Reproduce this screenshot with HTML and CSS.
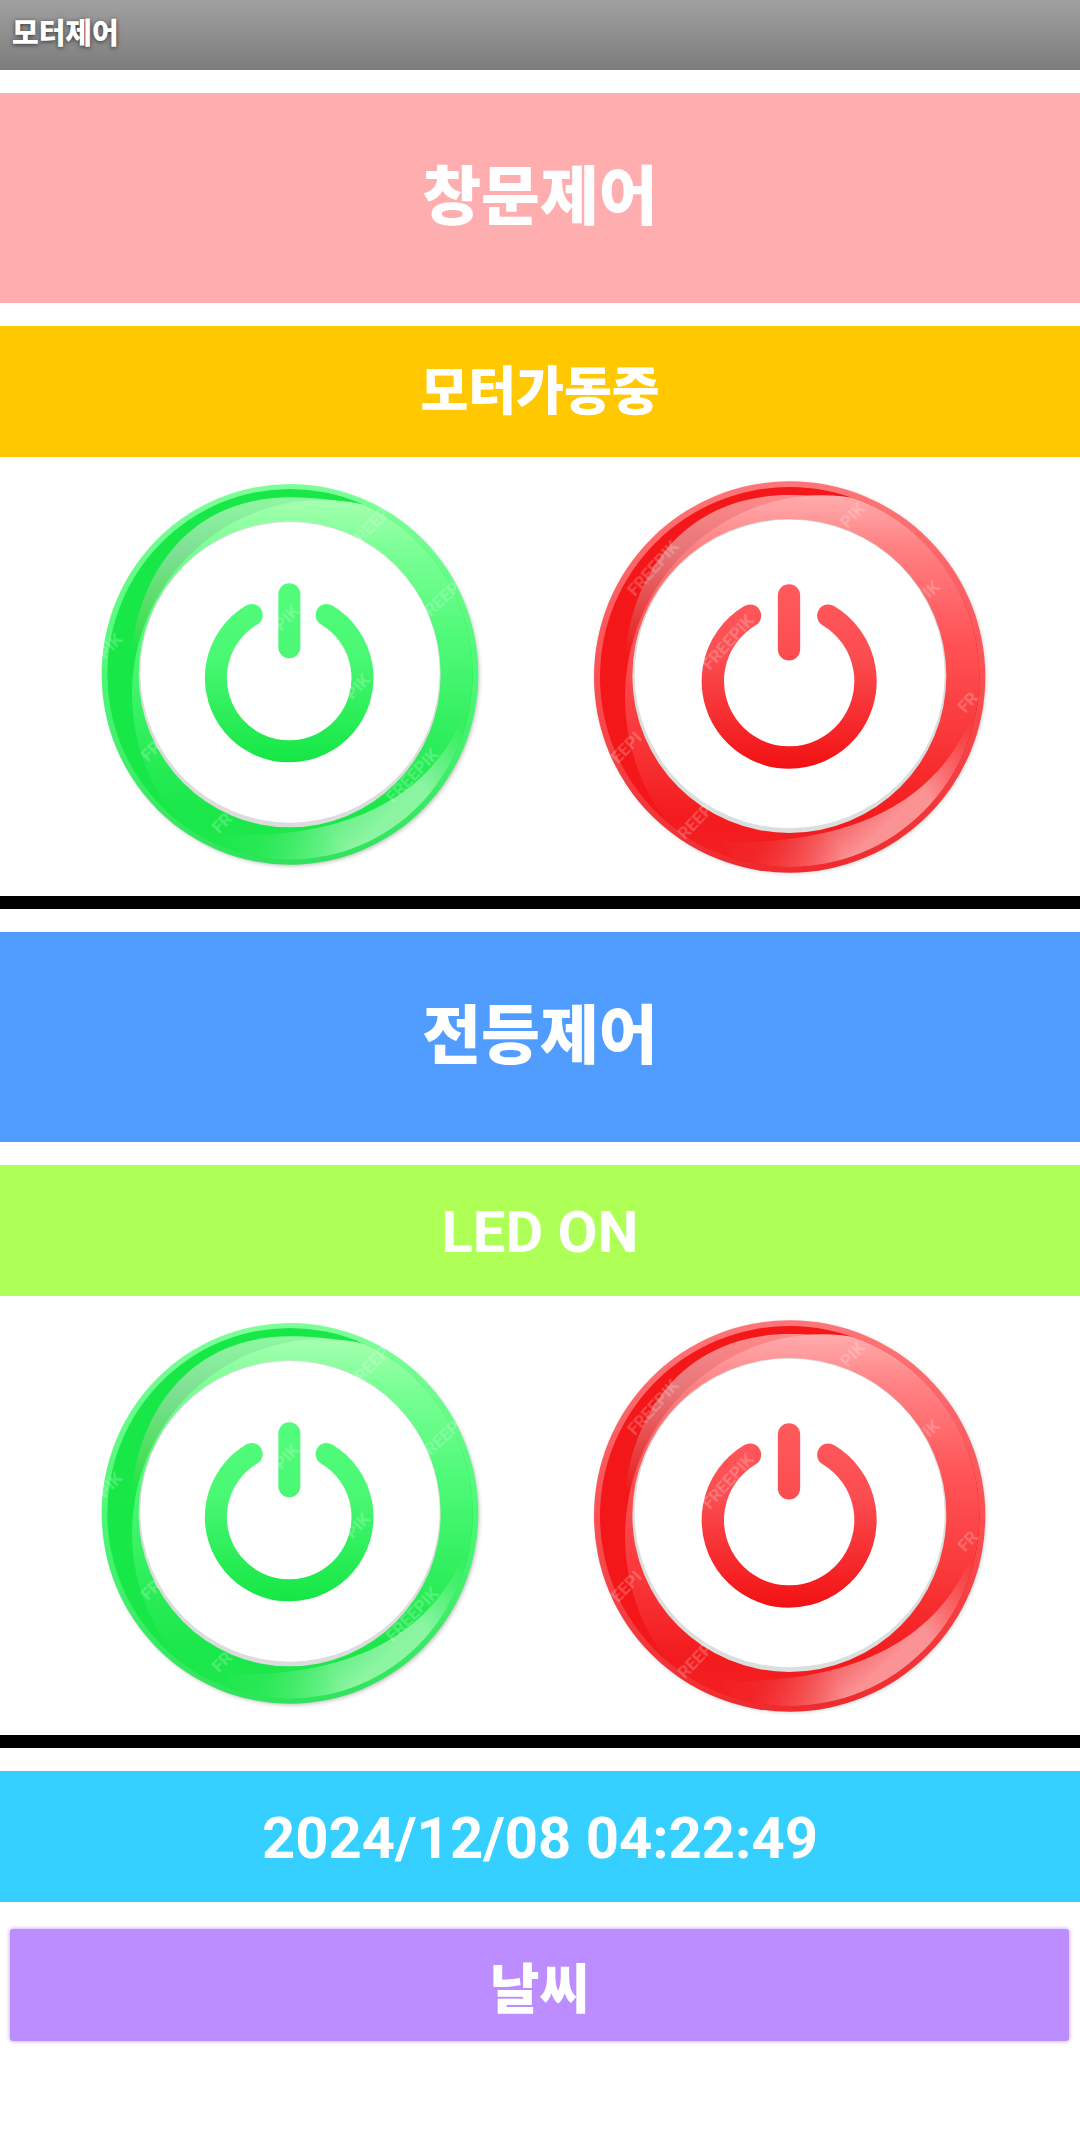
FILE: index.html
```html
<!DOCTYPE html>
<html lang="ko">
<head>
<meta charset="utf-8">
<meta name="viewport" content="width=device-width, initial-scale=1">
<title>모터제어</title>
<link rel="stylesheet" href="styles.css">
</head>
<body>
<header class="titlebar"><h1 class="titlebar-text">모터제어</h1></header>
<main class="screen">
  <section class="panel">
    <h2 class="heading heading-window">창문제어</h2>
    <p class="status status-motor">모터가동중</p>
    <div class="controls">
      <button class="power" type="button" aria-label="모터 켜기">
        <svg class="power-icon" viewBox="0 0 540 439" aria-hidden="true">
          <defs>
            <linearGradient id="g-rim" x1="0" y1="0" x2="0" y2="1"><stop offset="0" stop-color="#7dff98"/><stop offset=".5" stop-color="#4df876"/><stop offset="1" stop-color="#30e35c"/></linearGradient>
            <linearGradient id="g-gloss" gradientUnits="userSpaceOnUse" x1="0" y1="112" x2="0" y2="1216"><stop offset="0" stop-color="#8ff8a2"/><stop offset=".15" stop-color="#7fdf94"/><stop offset=".34" stop-color="#47df55"/><stop offset=".42" stop-color="#17e847"/><stop offset="1" stop-color="#17e847"/></linearGradient>
            <linearGradient id="g-face" x1="0" y1="0" x2="0" y2="1"><stop offset="0" stop-color="#a6ffb0"/><stop offset=".12" stop-color="#7cff96"/><stop offset=".35" stop-color="#50fa79"/><stop offset=".6" stop-color="#30ef5d"/><stop offset=".8" stop-color="#1ae749"/><stop offset="1" stop-color="#20ea4f"/></linearGradient>
            <linearGradient id="g-shine" gradientUnits="userSpaceOnUse" x1="740" y1="960" x2="880" y2="1110"><stop offset="0" stop-color="#40e968"/><stop offset="1" stop-color="#8cf5a2"/></linearGradient>
            <linearGradient id="g-fade" gradientUnits="userSpaceOnUse" x1="420" y1="1180" x2="1160" y2="780"><stop offset="0" stop-color="#fff" stop-opacity="0"/><stop offset=".4" stop-color="#fff"/><stop offset=".75" stop-color="#fff"/><stop offset="1" stop-color="#fff" stop-opacity="0"/></linearGradient>
            <linearGradient id="g-mark" gradientUnits="userSpaceOnUse" x1="0" y1="370" x2="0" y2="910"><stop offset="0" stop-color="#52fd7c"/><stop offset=".4" stop-color="#4af874"/><stop offset="1" stop-color="#14e644"/></linearGradient>
            <clipPath id="g-clip"><ellipse cx="630" cy="643" rx="548" ry="556"/></clipPath>
            <mask id="g-mask" maskUnits="userSpaceOnUse" x="0" y="0" width="1300" height="1300"><rect width="1300" height="1300" fill="url(#g-fade)"/></mask>
            <filter id="soft" x="-10%" y="-10%" width="120%" height="120%"><feGaussianBlur stdDeviation="7"/></filter>
            <g id="green-power" transform="translate(80 3) scale(.33333)">
              <ellipse cx="635" cy="649" rx="562" ry="568" fill="#777" opacity=".5" filter="url(#soft)"/>
              <ellipse cx="630" cy="643" rx="565" ry="571" fill="url(#g-rim)"/>
              <g clip-path="url(#g-clip)">
                <rect width="1300" height="1300" fill="#17e847"/>
                <path d="M152 643C152 370 310 112 630 112C740 112 830 130 900 155L1200 300V1250H400C240 1100 152 880 152 643Z" fill="url(#g-gloss)"/>
                <ellipse cx="728" cy="702" rx="572" ry="582" fill="url(#g-face)"/>
                <path d="M900 155C1080 240 1178 430 1178 643V300L1000 120Z" fill="#50fa79"/>
                <path mask="url(#g-mask)" d="M1178 690C1100 970 860 1140 430 1125L500 1200H800L1178 950Z" fill="url(#g-shine)"/>
              </g>
              <ellipse cx="629" cy="643" rx="453" ry="459" fill="#dcdcdc"/>
              <ellipse cx="630" cy="637" rx="449" ry="451" fill="#fff"/>
              <path d="M515 465A220 220 0 1 0 740 465M628 403V562" fill="none" stroke="url(#g-mark)" stroke-width="66" stroke-linecap="round"/>
              <g class="watermark">
                <text transform="translate(846 252) rotate(-46)">REEPIK</text><text transform="translate(1052 472) rotate(-42)">REEPIK</text>
                <text transform="translate(940 1032) rotate(-46)">FREEPIK</text><text transform="translate(75 600) rotate(-46)">PIK</text>
                <text transform="translate(205 908) rotate(-46)">FR</text><text transform="translate(418 1124) rotate(-46)">FR</text>
                <text transform="translate(605 515) rotate(-46)">PIK</text><text transform="translate(818 722) rotate(-46)">PIK</text>
              </g>
            </g>
          </defs>
          <use href="#green-power"/>
        </svg>
      </button>
      <button class="power" type="button" aria-label="모터 끄기">
        <svg class="power-icon" viewBox="0 0 540 439" aria-hidden="true">
          <defs>
            <linearGradient id="r-rim" x1="0" y1="0" x2="0" y2="1"><stop offset="0" stop-color="#ff7577"/><stop offset=".5" stop-color="#fa5053"/><stop offset="1" stop-color="#ee2b2e"/></linearGradient>
            <linearGradient id="r-gloss" gradientUnits="userSpaceOnUse" x1="0" y1="105" x2="0" y2="1240"><stop offset="0" stop-color="#ff8a8b"/><stop offset=".15" stop-color="#e67577"/><stop offset=".34" stop-color="#e63638"/><stop offset=".42" stop-color="#f31719"/><stop offset="1" stop-color="#f31719"/></linearGradient>
            <linearGradient id="r-face" x1="0" y1="0" x2="0" y2="1"><stop offset="0" stop-color="#ffacad"/><stop offset=".12" stop-color="#ff8385"/><stop offset=".35" stop-color="#ff5457"/><stop offset=".6" stop-color="#f93739"/><stop offset=".8" stop-color="#f31b1d"/><stop offset="1" stop-color="#f52123"/></linearGradient>
            <linearGradient id="r-shine" gradientUnits="userSpaceOnUse" x1="770" y1="980" x2="910" y2="1130"><stop offset="0" stop-color="#ef3739"/><stop offset="1" stop-color="#fb9294"/></linearGradient>
            <linearGradient id="r-fade" gradientUnits="userSpaceOnUse" x1="430" y1="1200" x2="1210" y2="790"><stop offset="0" stop-color="#fff" stop-opacity="0"/><stop offset=".4" stop-color="#fff"/><stop offset=".75" stop-color="#fff"/><stop offset="1" stop-color="#fff" stop-opacity="0"/></linearGradient>
            <linearGradient id="r-mark" gradientUnits="userSpaceOnUse" x1="0" y1="372" x2="0" y2="925"><stop offset="0" stop-color="#ff5a5d"/><stop offset=".4" stop-color="#fb4d50"/><stop offset="1" stop-color="#f21113"/></linearGradient>
            <clipPath id="r-clip"><ellipse cx="659" cy="651" rx="569" ry="570"/></clipPath>
            <mask id="r-mask" maskUnits="userSpaceOnUse" x="0" y="0" width="1320" height="1320"><rect width="1320" height="1320" fill="url(#r-fade)"/></mask>
            <g id="red-power" transform="translate(30 3) scale(.33333)">
              <ellipse cx="662" cy="654" rx="585" ry="585" fill="#777" opacity=".4" filter="url(#soft)"/>
              <ellipse cx="659" cy="651" rx="587" ry="587" fill="url(#r-rim)"/>
              <g clip-path="url(#r-clip)">
                <rect width="1320" height="1320" fill="#f31719"/>
                <path d="M162 651C162 370 325 105 659 105C780 105 870 125 945 150L1240 300V1280H410C250 1120 162 900 162 651Z" fill="url(#r-gloss)"/>
                <ellipse cx="757" cy="712" rx="592" ry="606" fill="url(#r-face)"/>
                <path d="M940 150C1130 240 1228 430 1228 651V300L1040 120Z" fill="#ff5457"/>
                <path mask="url(#r-mask)" d="M1228 700C1150 990 890 1160 450 1145L520 1240H840L1228 970Z" fill="url(#r-shine)"/>
              </g>
              <ellipse cx="658" cy="648" rx="471" ry="471" fill="#dadedd"/>
              <ellipse cx="659" cy="642" rx="465" ry="463" fill="#fff"/>
              <path d="M540 467A229 229 0 1 0 775 467M657 406V568" fill="none" stroke="url(#r-mark)" stroke-width="67" stroke-linecap="round"/>
              <g class="watermark">
                <text transform="translate(195 412) rotate(-48)">FREEPIK</text><text transform="translate(420 634) rotate(-48)">FREEPIK</text>
                <text transform="translate(832 208) rotate(-46)">PIK</text><text transform="translate(1078 418) rotate(-42)">IK</text>
                <text transform="translate(1186 762) rotate(-48)">FR</text><text transform="translate(145 914) rotate(-46)">EEPI</text>
                <text transform="translate(345 1142) rotate(-46)">REEP</text>
              </g>
            </g>
          </defs>
          <use href="#red-power"/>
        </svg>
      </button>
    </div>
  </section>
  <section class="panel">
    <h2 class="heading heading-light">전등제어</h2>
    <p class="status status-led">LED ON</p>
    <div class="controls">
      <button class="power" type="button" aria-label="전등 켜기"><svg class="power-icon" viewBox="0 0 540 439" aria-hidden="true"><use href="#green-power"/></svg></button>
      <button class="power" type="button" aria-label="전등 끄기"><svg class="power-icon" viewBox="0 0 540 439" aria-hidden="true"><use href="#red-power"/></svg></button>
    </div>
  </section>
  <p class="status status-clock"><time datetime="2024-12-08T04:22:49">2024/12/08 04:22:49</time></p>
  <button class="weather" type="button">날씨</button>
</main>
</body>
</html>
```
FILE: styles.css
```css
* {
  box-sizing: border-box;
}

body {
  margin: 0;
  background: #fff;
  color: #fff;
  font-family: Roboto, "Noto Sans CJK KR", sans-serif;
  font-weight: 700;
}

h1,
h2,
p {
  margin: 0;
}

button {
  border: 0;
  padding: 0;
  font: inherit;
  color: inherit;
  cursor: pointer;
}

.titlebar {
  padding: 11px 12px 13px;
  background: linear-gradient(#a0a0a0, #7d7d7d);
}

.titlebar-text {
  font-size: 29px;
  font-weight: 900;
  line-height: 46px;
  text-shadow: 0 1px 4px #333;
}

.screen {
  display: flex;
  flex-direction: column;
  gap: 23px;
  padding: 23px 0;
}

.panel {
  border-bottom: 13px solid #000;
}

.heading {
  margin-bottom: 23px;
  padding: 60px 16px;
  font-size: 64px;
  font-weight: 900;
  line-height: 90px;
  text-align: center;
}

.heading-window {
  background: #ffaeb0;
}

.heading-light {
  background: #519dff;
}

.status {
  padding: 32px 16px 29px;
  font-size: 58px;
  line-height: 70px;
  text-align: center;
}

.status-motor {
  background: #ffc800;
  font-size: 52px;
  font-weight: 900;
}

.status-led {
  background: #aeff56;
}

.status-clock {
  background: #35d0ff;
}

.controls {
  display: grid;
  grid-template-columns: 1fr 1fr;
}

.power {
  background: none;
}

.power-icon {
  display: block;
  width: 100%;
}

.watermark {
  fill: #fff;
  font-family: Roboto, sans-serif;
  font-size: 52px;
  font-weight: 700;
  opacity: .22;
}

.weather {
  margin: 4px 11px 4px 10px;
  padding: 27px 16px 15px;
  border-radius: 3px;
  background: #bc8dff;
  box-shadow: 0 0 4px #bc8dff;
  font-size: 54px;
  font-weight: 900;
  line-height: 70px;
}
```
